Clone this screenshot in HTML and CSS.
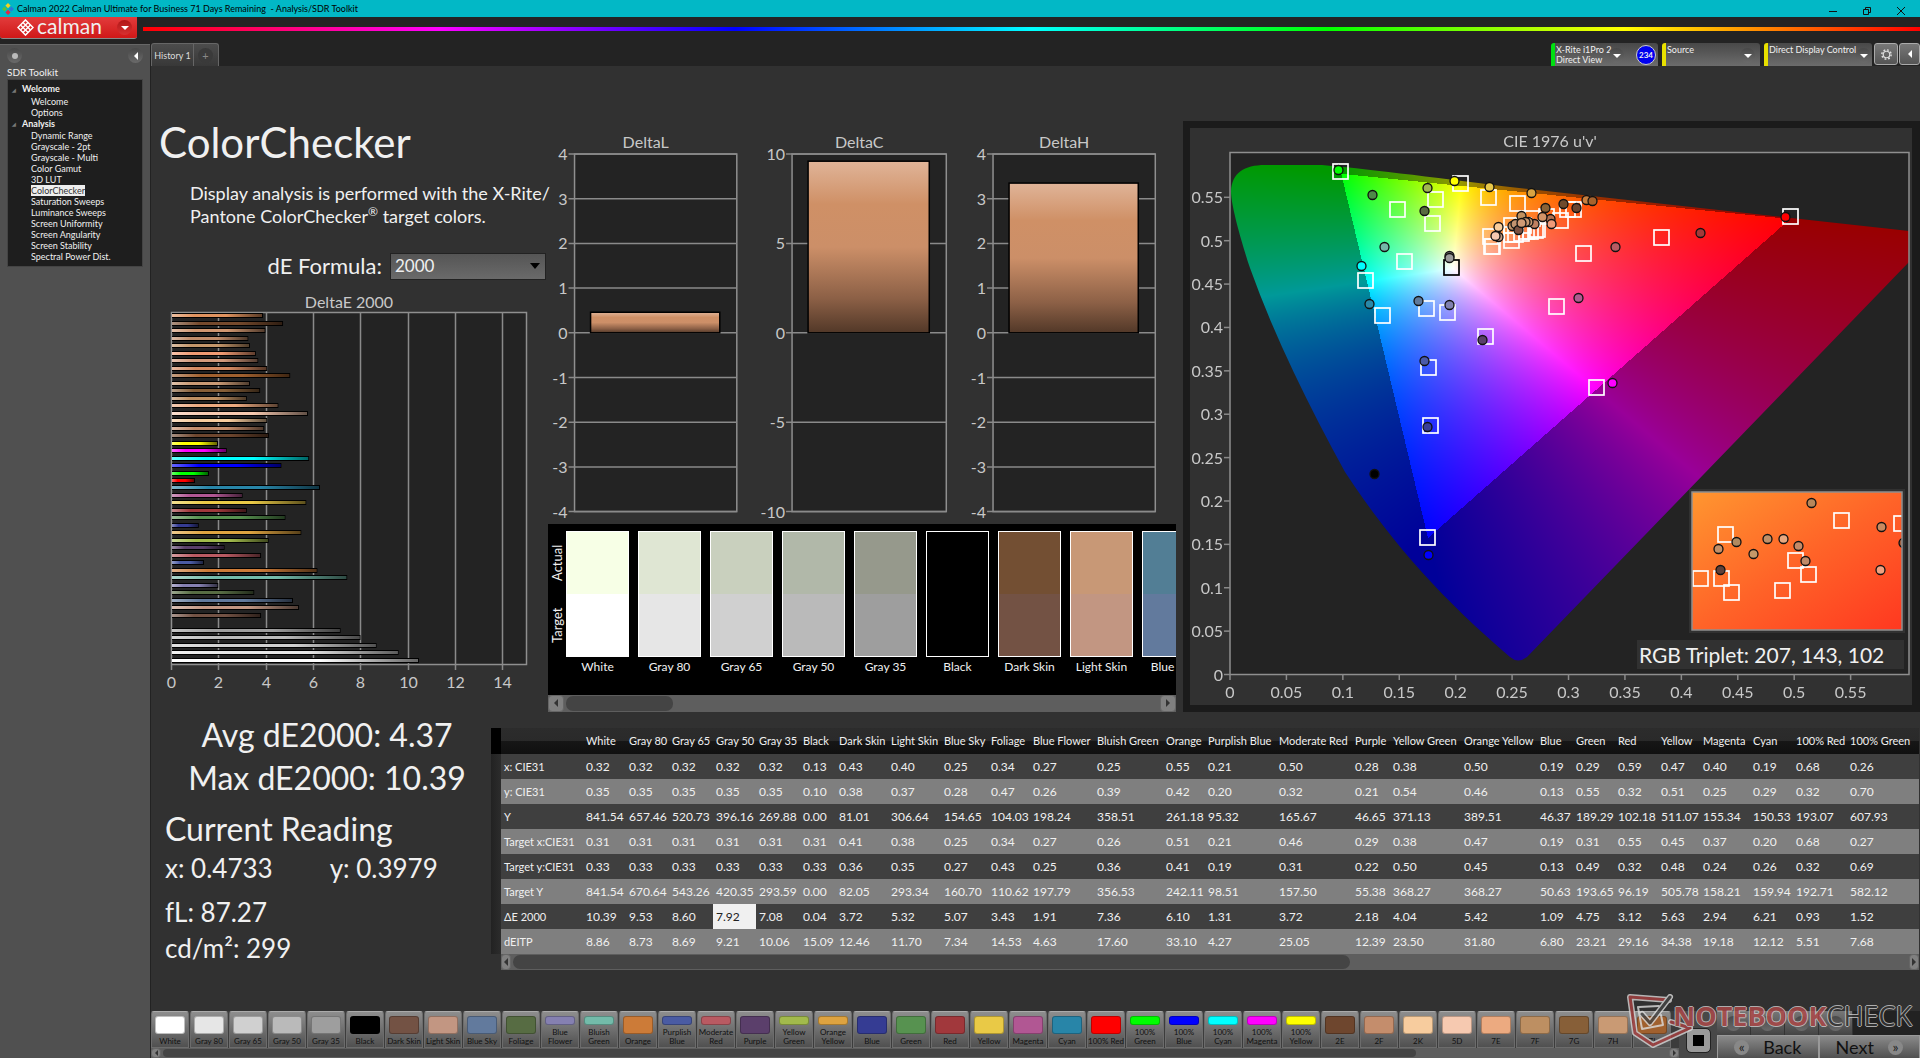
FILE: index.html
```html
<!DOCTYPE html>
<html lang="en">

<head>
    <meta charset="UTF-8">
    <meta name="viewport" content="width=device-width, initial-scale=1.0">
    <title>Calman 2022 - Analysis/SDR Toolkit</title>
    <link rel="stylesheet" href="styles.css">
</head>

<body>
    <header class="titlebar">
        <svg class="app-icon" viewBox="0 0 14 14">
            <path d="M7 0l3 3-3 3-3-3z" fill="#f4d21f" />
            <path d="M3 4l3 3-3 3-3-3z" fill="#58c040" />
            <path d="M11 4l3 3-3 3-3-3z" fill="#2a78d8" />
            <path d="M7 8l3 3-3 3-3-3z" fill="#e02848" />
        </svg>
        <span class="app-title">Calman 2022 Calman Ultimate for Business 71 Days Remaining&nbsp; - Analysis/SDR Toolkit</span>
        <div class="win-buttons">
            <button aria-label="Minimize"><svg viewBox="0 0 10 10"><path d="M1 5.500h8" /></svg></button>
            <button aria-label="Restore"><svg viewBox="0 0 10 10"><path d="M1.500 3.500h5v5h-5zM3.500 3.500v-2h5v5h-2" /></svg></button>
            <button aria-label="Close"><svg viewBox="0 0 10 10"><path d="M1 1l8 8M9 1l-8 8" /></svg></button>
        </div>
    </header>

    <div class="brandbar">
        <button class="brand">
            <svg class="brand-mark" viewBox="0 0 18 18">
                <path d="M9 1l8 8-8 8-8-8z" fill="none" stroke="#fff" stroke-width="1.600" />
                <path d="M6.300 3.700l8 8M3.700 6.300l8 8M11.700 3.700l-8 8M14.300 6.300l-8 8" stroke="#fff" stroke-width="1.500" />
            </svg>
            <span class="brand-name">calman</span>
            <span class="round red"><i class="down"></i></span>
        </button>
        <div class="rainbow"></div>
    </div>

    <div class="body">
        <aside class="sidebar">
            <div class="side-top">
                <span class="round"><i class="dot"></i></span>
                <button class="round" aria-label="Collapse"><i class="left"></i></button>
            </div>
            <h2>SDR Toolkit</h2>
            <nav class="tree">
                <h3>Welcome</h3>
                <a href="#">Welcome</a>
                <a href="#">Options</a>
                <h3>Analysis</h3>
                <a href="#">Dynamic Range</a>
                <a href="#">Grayscale - 2pt</a>
                <a href="#">Grayscale - Multi</a>
                <a href="#">Color Gamut</a>
                <a href="#">3D LUT</a>
                <a href="#" class="selected">ColorChecker</a>
                <a href="#">Saturation Sweeps</a>
                <a href="#">Luminance Sweeps</a>
                <a href="#">Screen Uniformity</a>
                <a href="#">Screen Angularity</a>
                <a href="#">Screen Stability</a>
                <a href="#">Spectral Power Dist.</a>
            </nav>
        </aside>

        <main class="main">
            <div class="tabbar">
                <button class="tab">History 1</button>
                <button class="tab tab-add" aria-label="Add history"><span class="round">+</span></button>
                <div class="devices">
                    <button class="device green">
                        <span>X-Rite i1Pro 2<br>Direct View</span>
                        <span class="round"><i class="down"></i></span>
                        <b class="count">234</b>
                    </button>
                    <button class="device">
                        <span>Source</span>
                        <span class="round"><i class="down"></i></span>
                    </button>
                    <button class="device wide">
                        <span>Direct Display Control</span>
                        <span class="round"><i class="down"></i></span>
                    </button>
                    <button class="square" aria-label="Settings">
                        <svg viewBox="0 0 14 14">
                            <circle cx="7" cy="7" r="3.500" fill="none" stroke="#ddd" stroke-width="1.300" />
                            <circle cx="7" cy="7" r="5" fill="none" stroke="#ddd" stroke-width="1.600" stroke-dasharray="1.960" />
                        </svg>
                    </button>
                    <button class="square" aria-label="Hide"><i class="left"></i></button>
                </div>
            </div>

            <div class="workspace">
                <div class="upper">
                    <section class="intro">
                        <h1>ColorChecker</h1>
                        <p>Display analysis is performed with the X-Rite/<br>Pantone ColorChecker<sup>®</sup> target colors.</p>
                        <div class="formula">
                            <label for="formula">dE Formula:</label>
                            <select id="formula">
                                <option>2000</option>
                            </select>
                        </div>
                        <svg id="deltaE" class="chart" viewBox="0 0 397 410"></svg>
                    </section>

                    <section class="middle">
                        <div class="deltas">
                            <svg id="deltaL" class="chart" viewBox="0 0 209 393"></svg>
                            <svg id="deltaC" class="chart" viewBox="0 0 209 393"></svg>
                            <svg id="deltaH" class="chart" viewBox="0 0 209 393"></svg>
                        </div>
                        <div class="strip">
                            <div class="strip-sides"><span>Actual</span><span>Target</span></div>
                            <div class="patches" id="patches"></div>
                        </div>
                        <div class="scroll"><button aria-label="Scroll left"><i class="left"></i></button><span class="thumb"></span><button aria-label="Scroll right"><i class="right"></i></button></div>
                    </section>

                    <section class="cie">
                        <svg id="cie" class="chart" viewBox="0 0 722 577">
                            <foreignObject x="40" y="25" width="679" height="522">
                                <canvas id="locus" width="679" height="522"></canvas>
                            </foreignObject>
                        </svg>
                    </section>
                </div>

                <div class="lower">
                    <section class="reading">
                        <p class="stat">Avg dE2000: 4.37</p>
                        <p class="stat">Max dE2000: 10.39</p>
                        <h2>Current Reading</h2>
                        <p class="xy"><span>x: 0.4733</span><span>y: 0.3979</span></p>
                        <p>fL: 87.27</p>
                        <p>cd/m²: 299</p>
                    </section>
                    <section class="results">
                        <table>
                            <thead>
                                <tr id="head"></tr>
                            </thead>
                            <tbody id="rows"></tbody>
                        </table>
                        <div class="scroll wide-scroll"><button aria-label="Scroll left"><i class="left"></i></button><span class="thumb"></span><button aria-label="Scroll right"><i class="right"></i></button></div>
                    </section>
                </div>
            </div>

            <footer class="bottombar">
                <div class="picker">
                    <div class="swatches" id="swatches"></div>
                    <div class="scroll small-scroll"><button aria-label="Scroll left"><i class="left"></i></button><span class="thumb"></span><button aria-label="Scroll right"><i class="right"></i></button></div>
                </div>
                <div class="stop"><button aria-label="Stop"></button></div>
                <div class="steps">
                    <div class="tools">
                        <button aria-label="Stop reading"><span class="round"></span></button>
                        <button aria-label="Read"><span class="round"></span></button>
                        <button aria-label="Read series"><span class="round"></span></button>
                        <button aria-label="Read continuous"><span class="round"></span></button>
                    </div>
                    <div class="pager">
                        <button><span class="round">«</span>Back</button>
                        <button>Next<span class="round">»</span></button>
                    </div>
                </div>
                <div class="watermark">
                    <svg viewBox="0 0 68 54">
                        <g fill="none" stroke-linejoin="round" stroke-linecap="round">
                            <path d="M42 6L3 3l5 36 18 12 37-17-19-6" stroke="#d8d8d8" stroke-width="6" />
                            <path d="M42 6L3 3l5 36 18 12 37-17-19-6" stroke="#a84040" stroke-width="3" />
                            <path d="M11 13l4 22 21-4-2-10M12 13l20-1" stroke="#ddd" stroke-width="2" />
                            <path d="M15 20l8 9L43 3" stroke="#ddd" stroke-width="6" />
                            <path d="M15 20l8 9L43 3" stroke="#444" stroke-width="3" />
                        </g>
                    </svg>
                    <span class="wm-red">NOTEBOOK</span><span class="wm-dark">CHECK</span>
                </div>
            </footer>
        </main>
    </div>

    <script src="script.js"></script>
</body>

</html>
```
FILE: styles.css
```css
* {
    box-sizing: border-box;
}

body {
    margin: 0;
    height: 100vh;
    display: flex;
    flex-direction: column;
    overflow: hidden;
    background: #232323;
    color: #f0f0f0;
    font-family: Lato, "Open Sans", sans-serif;
}

h1,
h2,
h3,
p {
    margin: 0;
    font-weight: 400;
}

button {
    margin: 0;
    padding: 0;
    border: 0;
    background: none;
    color: inherit;
    font: inherit;
}

/* title bar */
.titlebar {
    display: flex;
    align-items: center;
    height: 17px;
    flex: none;
    background: #02b8c6;
    color: #000;
}

.app-icon {
    width: 12px;
    height: 12px;
    margin: 0 3px 0 2px;
}

.app-title {
    font-size: 9px;
    line-height: 17px;
}

.win-buttons {
    display: flex;
    margin-left: auto;
    gap: 24px;
    padding-right: 14px;
}

.win-buttons button {
    width: 10px;
    height: 17px;
}

.win-buttons svg {
    width: 10px;
    fill: none;
    stroke: #111;
}

/* logo and rainbow */
.brandbar {
    display: flex;
    align-items: center;
    height: 26px;
    flex: none;
    gap: 6px;
}

.brand {
    display: flex;
    align-items: center;
    align-self: flex-start;
    width: 137px;
    height: 22px;
    padding: 0 5px 0 17px;
    background: linear-gradient(#e23c3c, #d01818);
    border-bottom: 1px solid #888;
    border-radius: 0 0 3px 3px;
}

.brand-mark {
    width: 17px;
    height: 17px;
}

.brand-name {
    font-size: 21px;
    line-height: 18px;
    padding: 0 0 4px 3px;
}

.brand .round {
    margin-left: auto;
}

.rainbow {
    flex: 1;
    height: 4px;
    margin-bottom: 2px;
    background: linear-gradient(90deg, #f00, #f0f, #00f, #0ff, #0f0, #ff0, #f00);
}

/* small round knobs and arrows */
.round {
    display: flex;
    align-items: center;
    justify-content: center;
    width: 15px;
    height: 15px;
    flex: none;
    border-radius: 50%;
    background: linear-gradient(#484848, #6a6a6a);
}

.round.red {
    background: linear-gradient(#b01818, #d83030);
}

.down,
.left,
.right {
    width: 0;
    height: 0;
    border: 4px solid transparent;
}

.down {
    border-top-color: #fff;
    border-bottom: 0;
}

.left {
    border-right-color: #fff;
    border-left: 0;
}

.right {
    border-left-color: #fff;
    border-right: 0;
}

.dot {
    width: 6px;
    height: 6px;
    border-radius: 50%;
    background: #bbb;
}

.body {
    flex: 1;
    display: flex;
    min-height: 0;
}

/* sidebar */
.sidebar {
    width: 150px;
    flex: none;
    padding: 3px 7px;
    margin-top: 1px;
    background: #505050;
    border-top: 1px solid #666;
}

.side-top {
    display: flex;
    justify-content: space-between;
    height: 18px;
}

.sidebar h2 {
    margin-bottom: 1px;
    font-size: 10px;
    line-height: 12px;
}

.tree {
    padding: 3px 0 4px 23px;
    height: 188px;
    background: #1e1e1e;
    border: 1px solid #444;
    display: flex;
    flex-direction: column;
    align-items: flex-start;
    font-size: 9px;
    line-height: 11px;
}

.tree h3 {
    font-size: 9px;
    line-height: 12px;
    font-weight: 700;
    margin-left: -11px;
}

.tree h3::before {
    content: "◢";
    font-size: 5px;
    color: #777;
    margin: 0 6px 0 -8px;
    vertical-align: middle;
}

.tree a {
    color: #f0f0f0;
    text-decoration: none;
}

.tree .selected {
    background: #eee;
    color: #333;
}

/* main column */
.main {
    flex: 1;
    min-width: 0;
    display: flex;
    flex-direction: column;
    border-left: 1px solid #222;
}

.tabbar {
    display: flex;
    height: 23px;
    flex: none;
}

.tab {
    width: 43px;
    background: linear-gradient(#4c4c4c, #383838);
    border: 1px solid #666;
    border-bottom: 0;
    font-size: 9px;
    color: #ddd;
    border-radius: 3px 0 0 0;
}

.tab-add {
    width: 25px;
    padding-left: 4px;
    border-left: 0;
    border-radius: 0 3px 0 0;
}

.tab-add .round {
    background: #3a3a3a;
    color: #888;
    font-size: 11px;
}

.devices {
    display: flex;
    margin-left: auto;
    gap: 4px;
    font-size: 9px;
    line-height: 10px;
    white-space: nowrap;
}

.device {
    display: flex;
    width: 98px;
    padding: 2px 5px 0 1px;
    text-align: left;
    background: linear-gradient(#484848, #6c6c6c);
    border-left: 4px solid #e8e000;
    border-radius: 3px 3px 0 0;
}

.device.green {
    width: 107px;
    border-left-color: #00e010;
}

.device.wide {
    width: 108px;
}

.device .round {
    margin: 3px 0 0 auto;
}

.device.green .round {
    margin: 3px 0 0 -2px;
}

.count {
    margin-left: auto;
    margin-right: -3px;
    width: 20px;
    height: 20px;
    border: 1px solid #ccc;
    border-radius: 50%;
    background: #0000f0;
    font-size: 8px;
    line-height: 18px;
    text-align: center;
}

.square {
    display: flex;
    align-items: center;
    justify-content: center;
    width: 24px;
    height: 22px;
    margin-left: -2px;
    background: linear-gradient(#777, #555);
    border: 1px solid #aaa;
    border-radius: 3px;
}

.square + .square {
    margin-left: -3px;
    width: 21px;
}

.square svg {
    width: 13px;
}

.workspace {
    flex: 1;
    min-height: 0;
    background: #313131;
}

.upper {
    display: grid;
    grid-template-columns: 397fr 635fr 737fr;
    height: 646px;
}

.chart {
    display: block;
    width: 100%;
}

.chart text {
    font-size: 16px;
    fill: #c8c8c8;
}

/* heading, formula, deltaE chart */
.intro {
    min-width: 0;
}

.intro h1 {
    padding: 50px 0 0 8px;
    font-size: 42px;
    line-height: 52px;
}

.intro p {
    padding: 14px 0 0 39px;
    font-size: 18px;
    line-height: 23px;
    white-space: nowrap;
}

.intro sup {
    font-size: 12px;
    line-height: 0;
}

.formula {
    display: flex;
    align-items: center;
    justify-content: flex-end;
    gap: 8px;
    padding: 24px 2px 0 0;
    height: 52px;
}

.formula label {
    font-size: 22px;
    line-height: 26px;
}

.formula select {
    width: 156px;
    height: 27px;
    padding: 0 4px;
    appearance: none;
    border: 1px solid #222;
    border-radius: 0;
    color: #f0f0f0;
    font: 17px/24px Lato, sans-serif;
    background: linear-gradient(#555, #6a6a6a);
}

.formula::after {
    content: "";
    width: 0;
    margin-left: -24px;
    margin-right: 6px;
    border: 5px solid transparent;
    border-top: 6px solid #000;
    border-bottom: 0;
}

#deltaE {
    margin-top: 10px;
}

/* delta bars and patch strip */
.middle {
    padding: 64px 7px 0 0;
    min-width: 0;
}

.deltas {
    display: flex;
}

.deltas svg {
    flex: 1;
    min-width: 0;
}

.strip {
    display: flex;
    height: 171px;
    background: #000;
    overflow: hidden;
}

.strip-sides {
    display: flex;
    flex-direction: column;
    width: 18px;
    flex: none;
    padding-top: 7px;
}

.strip-sides span {
    writing-mode: vertical-rl;
    transform: rotate(180deg);
    height: 63px;
    line-height: 18px;
    font-size: 13px;
    text-align: center;
}

.patches {
    display: flex;
    gap: 9px;
    padding-top: 7px;
    overflow: hidden;
}

.patch {
    width: 63px;
    flex: none;
    text-align: center;
    font-size: 12px;
    line-height: 20px;
    white-space: nowrap;
}

.patch div {
    height: 126px;
    border: 1px solid #fff;
}

/* scrollbars */
.scroll {
    display: flex;
    height: 17px;
    background: #5e5e5e;
}

.scroll button {
    display: flex;
    align-items: center;
    justify-content: center;
    width: 16px;
    background: #808080;
    border: 1px solid #666;
    border-radius: 4px;
}

.scroll button:last-child {
    margin-left: auto;
}

.scroll .left {
    border-right-color: #333;
}

.scroll .right {
    border-left-color: #333;
}

.thumb {
    width: 17%;
    margin: 1px 2px;
    border-radius: 7px;
    background: #444;
}

/* CIE panel */
.cie {
    margin-top: 55px;
    align-self: start;
    border: 7px solid #1b1b1b;
    border-right-width: 8px;
}

.cie canvas {
    display: block;
}

.chart .triplet {
    font-size: 21px;
    fill: #f0f0f0;
}

/* readings and table */
.lower {
    display: flex;
}

.reading {
    width: 340px;
    flex: none;
    padding: 1px 0 0 14px;
    font-size: 26px;
    line-height: 36px;
    white-space: nowrap;
}

.reading .stat {
    width: 324px;
    font-size: 32px;
    line-height: 43px;
    text-align: center;
}

.reading h2 {
    margin-top: 9px;
    font-size: 32px;
    line-height: 42px;
}

.reading .xy {
    display: flex;
    gap: 57px;
    margin-bottom: 8px;
}

.results {
    flex: 1;
    min-width: 0;
    margin: 16px 1px 0 0;
    overflow: hidden;
    font-size: 12px;
    line-height: 20px;
}

.results table {
    table-layout: fixed;
    border-collapse: collapse;
    width: 1432px;
}

.results th,
.results td {
    padding: 0 0 0 3px;
    height: 25px;
    text-align: left;
    font-weight: 400;
    white-space: nowrap;
}

.results th {
    font-size: 11px;
}

.results thead th {
    height: 26px;
    background: linear-gradient(#2c2c2c 0, #2a2a2a 48%, #161616 52%, #101010);
}

.results tr > :first-child {
    background: linear-gradient(90deg, #222, #2c2c2c);
}

.results thead tr > :first-child {
    background: #000;
}

.results tbody tr {
    background: #3f3f3f;
}

.results tbody tr:nth-child(even) {
    background: #7f7f7f;
}

.results td.picked {
    background: #f0f0f0;
    color: #222;
}

.wide-scroll {
    margin-left: 10px;
    height: 16px;
}

.wide-scroll button,
.small-scroll button {
    width: 10px;
}

.wide-scroll .thumb {
    width: 59%;
}

/* bottom bar */
.bottombar {
    position: relative;
    display: flex;
    flex: none;
    height: 47px;
    background: #3c3c3c;
}

.picker {
    flex: 1;
    min-width: 0;
    overflow: hidden;
}

.swatches {
    display: flex;
    height: 37px;
    overflow: hidden;
}

.swatch {
    display: flex;
    flex-direction: column;
    align-items: center;
    width: 38px;
    margin-right: 1px;
    flex: none;
    padding: 4px 0 1px;
    background: linear-gradient(#8e8e8e, #505050);
    border: 1px solid #6c6c6c;
    border-top-color: #aaa;
    border-radius: 3px 3px 0 0;
    color: #111;
    font-size: 8px;
    line-height: 9px;
    white-space: nowrap;
}

.swatch i {
    flex: 1;
    width: 30px;
    margin-bottom: 3px;
    border: 1px solid rgba(0, 0, 0, .25);
    border-radius: 3px;
}

.small-scroll {
    height: 10px;
}

.small-scroll .thumb {
    width: 82%;
}

.small-scroll i {
    border-width: 3px;
}

.stop {
    display: flex;
    align-items: center;
    justify-content: center;
    width: 38px;
    padding-top: 12px;
    background: #484848;
}

.stop button {
    width: 23px;
    height: 23px;
    background: #000;
    border: 6px solid #999;
    outline: 1px solid #222;
    border-radius: 4px;
}

.steps {
    width: 203px;
    display: flex;
    flex-direction: column;
}

.tools {
    display: flex;
    height: 24px;
    background: #222;
}

.tools button {
    display: flex;
    align-items: center;
    justify-content: center;
    width: 34px;
    background: linear-gradient(#777, #444);
    border-right: 1px solid #333;
}

.pager {
    display: flex;
    flex: 1;
}

.pager button {
    display: flex;
    align-items: center;
    justify-content: center;
    gap: 14px;
    flex: 1;
    background: linear-gradient(#8a8a8a, #505050);
    border: 1px solid #999;
    border-bottom: 0;
    color: #111;
    font-size: 18px;
    line-height: 20px;
}

.pager .round {
    background: #888;
    color: #222;
    font-size: 14px;
    line-height: 12px;
}

.watermark {
    position: absolute;
    right: 8px;
    top: -17px;
    display: flex;
    align-items: flex-start;
    opacity: .8;
    font: 700 27px/44px "Open Sans", sans-serif;
    pointer-events: none;
}

.watermark svg {
    width: 68px;
    margin-right: -22px;
}

.wm-red,
.wm-dark {
    color: #b04848;
    text-shadow: 1px 0 #ccc, -1px 0 #ccc, 0 1px #ccc, 0 -1px #ccc;
}

.wm-dark {
    color: #333;
    font-weight: 400;
}
```
FILE: script.js
```javascript
function el(id) {
    return document.getElementById(id);
}

function line(x1, y1, x2, y2, color) {
    return `<path d="M${x1} ${y1}L${x2} ${y2}" stroke="${color || '#8a8a8a'}" stroke-width="1.5"/>`;
}

function text(x, y, anchor, value, cls) {
    return `<text x="${x}" y="${y}" text-anchor="${anchor}" class="${cls || ''}">${value}</text>`;
}

function frame(x, y, w, h, fill) {
    return `<rect x="${x}" y="${y}" width="${w}" height="${h}" fill="${fill}" stroke="#8f8f8f" stroke-width="1.5"/>`;
}

// name, target colour, dE2000
const patches = [
    ["White", "#ffffff", 10.39], ["Gray 80", "#e6e6e6", 9.53], ["Gray 65", "#d0d0d0", 8.6],
    ["Gray 50", "#bababa", 7.92], ["Gray 35", "#9e9e9e", 7.08], ["Black", "#000000", 0.04],
    ["Dark Skin", "#735244", 3.72], ["Light Skin", "#c29682", 5.32], ["Blue Sky", "#627a9d", 5.07],
    ["Foliage", "#576c43", 3.43], ["Blue Flower", "#8580b1", 1.91], ["Bluish Green", "#73bbaa", 7.36],
    ["Orange", "#cc7b38", 6.1], ["Purplish Blue", "#4a5ba3", 1.31], ["Moderate Red", "#b95a62", 3.72],
    ["Purple", "#5b3f6b", 2.18], ["Yellow Green", "#a2ba4c", 4.04], ["Orange Yellow", "#dea340", 5.42],
    ["Blue", "#353c93", 1.09], ["Green", "#579250", 4.75], ["Red", "#a1383c", 3.12],
    ["Yellow", "#e9c946", 5.63], ["Magenta", "#b15793", 2.94], ["Cyan", "#2885a8", 6.21],
    ["100% Red", "#ff0000", 0.93], ["100% Green", "#00ff00", 1.52], ["100% Blue", "#0000ff", 4.58],
    ["100% Cyan", "#00ffff", 5.75], ["100% Magenta", "#ff00ff", 2.27], ["100% Yellow", "#ffff00", 1.9],
    ["2E", "#6e462e", 4.05], ["2F", "#c48d6c", 3.85], ["2K", "#f7cc9e", 3.98], ["5D", "#f6c9b0", 5.7],
    ["7E", "#ecaa80", 4.45], ["7F", "#bd8f62", 3.12], ["7G", "#875f38", 3.68], ["7H", "#c99a74", 3.25],
    ["7I", "#a0602e", 4.95], ["7J", "#d58a62", 3.98], ["8D", "#d39a7c", 3.6], ["8E", "#f09a72", 3.5],
    ["8F", "#c4966a", 3.25], ["8G", "#c08c6a", 3.18], ["8H", "#d09670", 3.9], ["8I", "#75492c", 4.65],
    ["8J", "#e0935f", 3.8]
];

function drawDeltaE() {
    let s = text(198, 18, "middle", "DeltaE 2000") + frame(20.5, 22.5, 355, 352, "#232323");
    const unit = 355 / 15;
    for (let n = 0; n <= 14; n += 2) {
        const x = Math.round(20 + n * unit) + 0.5;
        s += line(x, n ? 22 : 375, x, 380) + text(x, 398, "middle", n);
    }
    s += `<defs><linearGradient id="shade"><stop offset="0" stop-color="#fff" stop-opacity=".4"/>
        <stop offset=".25" stop-color="#fff" stop-opacity="0"/><stop offset=".6" stop-color="#000" stop-opacity="0"/>
        <stop offset="1" stop-color="#000" stop-opacity=".6"/></linearGradient></defs>`;
    patches.forEach((p, i) => {
        if (p[2] < 0.1) return;
        const y = Math.round(369.5 - i * 7.48) - 2;
        const w = p[2] * unit;
        s += `<rect x="21" y="${y}" width="${w + 1}" height="5" fill="#000"/>
            <rect x="21" y="${y + 1}" width="${w}" height="3" fill="${p[1]}"/>
            <rect x="21" y="${y + 1}" width="${w}" height="3" fill="url(#shade)"/>`;
    });
    el("deltaE").innerHTML = s;
}

function drawDelta(id, title, left, right, max, step, value) {
    const top = 24, zero = 202.5, bottom = 381;
    let s = text((left + right) / 2 - 10, 18, "middle", title) + frame(left, top, right - left, bottom - top, "#232323");
    for (let n = -max; n <= max; n += step) {
        const y = zero - n / max * 178.5;
        s += line(left - 6, y, right, y) + text(left - 7, y + 6, "end", n);
    }
    const h = value / max * 178.5;
    s += `<defs><linearGradient id="${id}Fill" x2="0" y2="1"><stop offset="0" stop-color="#e0b498"/>
        <stop offset=".25" stop-color="#cf9066"/><stop offset=".5" stop-color="#cc8f68"/>
        <stop offset=".8" stop-color="#8c6046"/><stop offset="1" stop-color="#523828"/></linearGradient></defs>
        <rect x="${left + 16}" y="${zero - h}" width="${right - left - 33}" height="${h}" fill="url(#${id}Fill)" stroke="#000" stroke-width="1.5"/>`;
    el(id).innerHTML = s;
}

const actual = ["#f7ffe6", "#dfe6d3", "#c9d0be", "#b1b8a9", "#96998c", "#000000", "#734f33", "#c89876", "#527e95"];

function drawPatches() {
    el("patches").innerHTML = actual.map((c, i) =>
        `<div class="patch"><div style="background: linear-gradient(${c} 50%, ${patches[i][1]} 50%)"></div>${patches[i][0]}</div>`
    ).join("");
    el("swatches").innerHTML = patches.slice(0, 39).map(p => {
        const two = /^(100% [^R]|Blue F|Bluish|Purplish|Moderate|Yellow G|Orange Y)/.test(p[0]);
        return `<button class="swatch"><i style="background: ${p[1]}"></i>${two ? p[0].replace(" ", "<br>") : p[0]}</button>`;
    }).join("");
}

// CIE 1976 u'v' diagram
const targets = [
    [.0987, .5805], [.205, .567], [.1485, .537], [.183, .548], [.18, .5205], [.2296, .5505], [.255, .5435],
    [.155, .477], [.1205, .455], [.136, .414], [.1744, .4226], [.1936, .4177], [.2267, .39], [.176, .354],
    [.178, .2876], [.1757, .159], [.3254, .3308], [.2894, .4252], [.3137, .4857], [.3827, .5037],
    [.4969, .5285], [.2316, .5054], [.2325, .4939], [.2335, .4935], [.2496, .5185], [.2496, .5004],
    [.2688, .5265], [.281, .5285], [.2933, .5239], [.2998, .5365], [.3046, .5365], [.25, .5077],
    [.2535, .5077], [.2585, .509], [.263, .511], [.2665, .511], [.271, .5127], [.273, .514], [.2605, .5177]
];

const measured = [
    [.0966, .5818, "#00ff00"], [.1995, .5686, "#ffff00"], [.1752, .5606, "#a0b850"], [.1267, .5523, "#4e8a48"],
    [.1731, .5338, "#586b40"], [.2304, .562, "#e8c84a"], [.2673, .5554, "#d9a441"], [.1372, .4923, "#74b8a8"],
    [.1167, .4707, "#00ffff"], [.1242, .4274, "#2a88a8"], [.1677, .431, "#5f7a9c"], [.1949, .4257, "#8080b0"],
    [.1949, .482, "#808080"], [.1949, .4804, "#9a9a9a"], [.2246, .386, "#5a3f6b"], [.1731, .3608, "#4a5aa8"],
    [.1757, .2858, "#3a3f98"], [.1765, .1372, "#0000ff"], [.1284, .2311, "#000000"], [.3392, .3357, "#ff00ff"],
    [.3095, .4336, "#b05a90"], [.3417, .4923, "#b85a62"], [.4174, .509, "#a23a3a"], [.4931, .5271, "#ff0000"],
    [.3161, .5469, "#c87f3e"], [.3214, .5454, "#a8622c"], [.2957, .5423, "#6f4a2c"], [.3072, .5373, "#6b4530"],
    [.2803, .5373, "#8a6236"], [.2842, .525, "#b07050"], [.2777, .5273, "#d29468"], [.2854, .5193, "#f09a78"],
    [.2703, .5196, "#c08060"], [.2585, .5289, "#c0905e"], [.2653, .5212, "#c89870"], [.262, .5212, "#c89870"],
    [.2505, .5173, "#c09068"], [.2532, .5193, "#c49470"], [.2561, .512, "#7a5040"], [.2585, .5208, "#d09a74"],
    [.2384, .5154, "#f8cc9c"], [.2387, .5043, "#c09880"], [.2357, .5054, "#f5c8b0"]
];

// inset markers, in inset pixels
const insetTargets = [[34, 42], [150, 28], [210, 31], [104, 68], [117, 82], [9, 86], [30, 86], [40, 100], [91, 98]];
const insetMeasured = [
    [120, 11, "#b8875a"], [190, 35, "#c88a60"], [45, 50, "#b08a60"], [76, 47, "#c09068"], [92, 47, "#e8a880"],
    [107, 54, "#c48a68"], [27, 57, "#c49068"], [62, 62, "#c49868"], [114, 69, "#c08a68"], [29, 78, "#604038"],
    [189, 78, "#f0a080"], [212, 51, "#a06040"]
];

const SX = 1128.4, SY = 867.6;

function square(x, y, color) {
    return `<rect x="${x - 8}" y="${y - 7}" width="15" height="15" fill="none" stroke="${color || '#fff'}" stroke-width="1.7"/>`;
}

function dot(x, y, color) {
    return `<circle cx="${x - 0.5}" cy="${y}" r="4.500" fill="${color}" stroke="#111" stroke-width="1.3"/>`;
}

function drawCie() {
    let s = text(360, 19, "middle", "CIE 1976 u'v'") + frame(40, 24.5, 679, 522, "none");
    for (let i = 0; i < 12; i++) {
        const label = String(Math.round(i * 5) / 100);
        const x = 40 + i * 0.05 * SX, y = 546.5 - i * 0.05 * SY;
        s += line(x, 546, x, 552) + text(x, 570, "middle", label);
        s += line(34, y, 40, y) + text(33, y + 6, "end", label);
    }
    const px = u => Math.round(40 + u * SX), py = v => Math.round(546.5 - v * SY);
    targets.forEach(t => s += square(px(t[0]), py(t[1])));
    s += square(px(.197), py(.47), "#000");
    measured.forEach(m => s += dot(px(m[0]), py(m[1]), m[2]));

    s += `<defs><linearGradient id="glow" x2="1" y2="1"><stop offset="0" stop-color="#ff9630"/>
        <stop offset=".5" stop-color="#ff6428"/><stop offset="1" stop-color="#ff3820"/></linearGradient></defs>
        <rect x="499" y="361" width="216" height="144" fill="#313131"/>
        <svg x="502" y="364" width="210" height="138"><rect width="210" height="138" fill="url(#glow)"/>`;
    insetTargets.forEach(t => s += square(t[0], t[1]));
    insetMeasured.forEach(m => s += dot(m[0], m[1], m[2]));
    s += `</svg>` + frame(502, 364, 210, 138, "none");
    s += `<rect x="447" y="512" width="267" height="29" fill="#313131"/>` + text(449, 535, "start", "RGB Triplet: 207, 143, 102", "triplet");
    el("cie").insertAdjacentHTML("beforeend", s);
}

// colour of one chromaticity with P3 primaries, scaled to full brightness
function chroma(u, v) {
    const x = 9 * u / (6 * u - 16 * v + 12), y = 4 * v / (6 * u - 16 * v + 12);
    const X = x / y, Z = (1 - x - y) / y;
    const rgb = [
        2.4935 * X - 0.9314 - 0.4027 * Z,
        -0.8295 * X + 1.7627 + 0.0236 * Z,
        0.0358 * X - 0.0762 + 0.9569 * Z
    ];
    const inside = Math.min(...rgb) >= 0;
    const max = Math.max(...rgb);
    return rgb.map(c => Math.pow(Math.max(c, 0) / max, 1 / 1.1) * (inside ? 255 : 153));
}

function drawLocus() {
    const canvas = el("locus"), ctx = canvas.getContext("2d");
    const w = canvas.width, h = canvas.height;
    ctx.fillStyle = "#232323";
    ctx.fillRect(0, 0, w, h);

    const buffer = document.createElement("canvas");
    buffer.width = w;
    buffer.height = h;
    const bctx = buffer.getContext("2d");
    const img = bctx.createImageData(w, h);
    for (let j = 0; j < h; j++) {
        for (let i = 0; i < w; i++) {
            const c = chroma((i + 0.5) / SX, (h - j - 0.5) / SY), k = (j * w + i) * 4;
            img.data[k] = c[0];
            img.data[k + 1] = c[1];
            img.data[k + 2] = c[2];
            img.data[k + 3] = 255;
        }
    }
    bctx.putImageData(img, 0, 0);

    ctx.beginPath();
    ctx.moveTo(35, 12);
    ctx.lineTo(92, 12);
    ctx.bezierCurveTo(130, 15, 200, 24, 280, 34);
    ctx.lineTo(679, 78);
    ctx.lineTo(679, 109);
    ctx.lineTo(297, 504);
    ctx.quadraticCurveTo(288, 511, 280, 504);
    ctx.bezierCurveTo(215, 448, 165, 395, 115, 319);
    ctx.bezierCurveTo(80, 255, 45, 185, 20, 115);
    ctx.bezierCurveTo(8, 78, 1, 50, 1, 38);
    ctx.bezierCurveTo(2, 20, 14, 12, 35, 12);
    ctx.clip();
    ctx.drawImage(buffer, 0, 0);
}

// results table
const widths = [10, 82, 43, 43, 44, 43, 44, 36, 52, 53, 47, 42, 64, 69, 42, 71, 76, 38, 71, 76, 36, 42, 43, 42, 50, 43, 54, 76];
const rows = {
    "x: CIE31": "0.32 0.32 0.32 0.32 0.32 0.13 0.43 0.40 0.25 0.34 0.27 0.25 0.55 0.21 0.50 0.28 0.38 0.50 0.19 0.29 0.59 0.47 0.40 0.19 0.68 0.26",
    "y: CIE31": "0.35 0.35 0.35 0.35 0.35 0.10 0.38 0.37 0.28 0.47 0.26 0.39 0.42 0.20 0.32 0.21 0.54 0.46 0.13 0.55 0.32 0.51 0.25 0.29 0.32 0.70",
    "Y": "841.54 657.46 520.73 396.16 269.88 0.00 81.01 306.64 154.65 104.03 198.24 358.51 261.18 95.32 165.67 46.65 371.13 389.51 46.37 189.29 102.18 511.07 155.34 150.53 193.07 607.93",
    "Target x:CIE31": "0.31 0.31 0.31 0.31 0.31 0.31 0.41 0.38 0.25 0.34 0.27 0.26 0.51 0.21 0.46 0.29 0.38 0.47 0.19 0.31 0.55 0.45 0.37 0.20 0.68 0.27",
    "Target y:CIE31": "0.33 0.33 0.33 0.33 0.33 0.33 0.36 0.35 0.27 0.43 0.25 0.36 0.41 0.19 0.31 0.22 0.50 0.45 0.13 0.49 0.32 0.48 0.24 0.26 0.32 0.69",
    "Target Y": "841.54 670.64 543.26 420.35 293.59 0.00 82.05 293.34 160.70 110.62 197.79 356.53 242.11 98.51 157.50 55.38 368.27 368.27 50.63 193.65 96.19 505.78 158.21 159.94 192.71 582.12",
    "ΔE 2000": "10.39 9.53 8.60 7.92 7.08 0.04 3.72 5.32 5.07 3.43 1.91 7.36 6.10 1.31 3.72 2.18 4.04 5.42 1.09 4.75 3.12 5.63 2.94 6.21 0.93 1.52",
    "dEITP": "8.86 8.73 8.69 9.21 10.06 15.09 12.46 11.70 7.34 14.53 4.63 17.60 33.10 4.27 25.05 12.39 23.50 31.80 6.80 23.21 29.16 34.38 19.18 12.12 5.51 7.68"
};

function drawTable() {
    const names = ["", ""].concat(patches.slice(0, 26).map(p => p[0]));
    el("head").innerHTML = names.map((n, i) => `<th style="width: ${widths[i]}px">${n}</th>`).join("");
    el("rows").innerHTML = Object.keys(rows).map(name => {
        const cells = rows[name].split(" ").map((v, i) =>
            `<td${name === "ΔE 2000" && i === 3 ? ' class="picked"' : ""}>${v}</td>`).join("");
        return `<tr><td></td><th scope="row">${name}</th>${cells}</tr>`;
    }).join("");
}

drawDeltaE();
drawDelta("deltaL", "DeltaL", 26.5, 188.5, 4, 1, 0.46);
drawDelta("deltaC", "DeltaC", 35, 189, 10, 5, 9.6);
drawDelta("deltaH", "DeltaH", 26, 188, 4, 1, 3.35);
drawPatches();
drawLocus();
drawCie();
drawTable();
```
